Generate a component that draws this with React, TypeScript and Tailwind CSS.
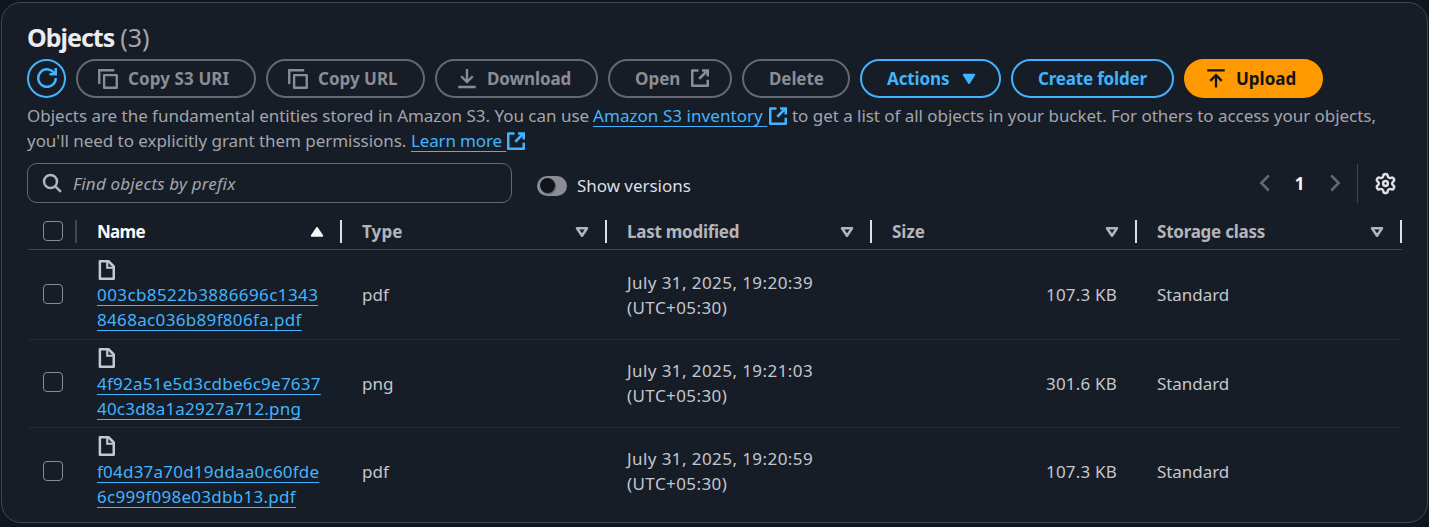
import type { ReactNode } from 'react';

type IconProps = { className?: string; children: ReactNode };

function Icon({ className = '', children }: IconProps) {
  return (
    <svg
      viewBox="0 0 16 16"
      className={`size-5 shrink-0 ${className}`}
      fill="none"
      stroke="currentColor"
      strokeWidth="2"
    >
      {children}
    </svg>
  );
}

const CopyIcon = () => (
  <Icon>
    <path d="M4.9 4.9H15V15H4.9z" strokeWidth="1.9" strokeLinejoin="round" />
    <path d="M1 12V1h12" strokeWidth="1.9" />
  </Icon>
);

const ExternalIcon = ({ className = '' }: { className?: string }) => (
  <Icon className={className}>
    <path d="M6.8 1.9H1.8v12.3h12.4V9.4" strokeLinejoin="round" />
    <path d="M9.6 1.9h4.6v4.8M14 2 7.4 8.6" />
  </Icon>
);

const FileIcon = () => (
  <Icon>
    <path d="M2.3 1h6.9l4.2 4.2V15H2.3z" strokeLinejoin="round" />
    <path d="M8.2 1.4v4.8h5" strokeWidth="1.7" />
  </Icon>
);

type ButtonProps = { width: string; tone?: string; children: ReactNode };

function PillButton({ width, tone = 'border-[#656871] text-[#8c8c94]', children }: ButtonProps) {
  return (
    <button
      className={`flex h-[39px] shrink-0 items-center whitespace-nowrap rounded-full border-2 text-[17px] font-bold leading-[25px] ${width} ${tone}`}
    >
      {children}
    </button>
  );
}

const BLUE = 'border-[#42b4ff] text-[#42b4ff]';

const LINK =
  'text-[#42b4ff] underline decoration-1 underline-offset-[4px] [text-decoration-skip-ink:none]';

function Checkbox() {
  return <span className="size-5 shrink-0 rounded-[4px] border border-[#8c8c94]" />;
}

const columns = [
  { label: 'Name', spacing: 'tracking-[-0.7px]', sorted: true },
  { label: 'Type', spacing: 'tracking-[0.1px]' },
  { label: 'Last modified', spacing: 'tracking-[-0.26px]' },
  { label: 'Size', spacing: '' },
  { label: 'Storage class', spacing: 'tracking-[-0.24px]' },
];

const rows = [
  {
    name: [
      { text: '003cb8522b3886696c1343', spacing: 'tracking-[0.41px]' },
      { text: '8468ac036b89f806fa.pdf', spacing: 'tracking-[0.33px]' },
    ],
    type: 'pdf',
    date: 'July 31, 2025, 19:20:39',
    size: '107.3 KB',
    height: 'h-[90px]',
    iconTop: 'pt-[3px]',
    dateBottom: '',
    checkBottom: 'pb-px',
  },
  {
    name: [
      { text: '4f92a51e5d3cdbe6c9e7637', spacing: 'tracking-[0.24px]' },
      { text: '40c3d8a1a2927a712.png', spacing: 'tracking-[0.2px]' },
    ],
    type: 'png',
    date: 'July 31, 2025, 19:21:03',
    size: '301.6 KB',
    height: 'h-[88px]',
    iconTop: 'pt-[2px]',
    dateBottom: 'pb-px',
    checkBottom: 'pb-[3px]',
  },
  {
    name: [
      { text: 'f04d37a70d19ddaa0c60fde', spacing: 'tracking-[0.22px]' },
      { text: '6c999f098e03dbb13.pdf', spacing: 'tracking-[0.27px]' },
    ],
    type: 'pdf',
    date: 'July 31, 2025, 19:20:59',
    size: '107.3 KB',
    height: 'h-[87px]',
    iconTop: 'pt-[2px]',
    dateBottom: 'pb-px',
    checkBottom: 'pb-px',
  },
];

const GRID = 'grid grid-cols-[49px_repeat(5,265px)]';

export default function App() {
  return (
    <div className="h-[527px] w-[1429px] overflow-hidden bg-[#10161e] pl-px pt-[2px] font-['Noto_Sans',sans-serif] text-[17px] leading-[25px] text-[#c6c6cd]">
      <section className="flex h-[521px] w-[1427px] flex-col rounded-[20px] border border-[#424650] bg-[#161d26] pl-[25px] pr-[24px]">
        <h2 className="mt-[19px] flex h-[30px] items-center gap-[6px] text-[25px] leading-[30px]">
          <span className="font-bold tracking-[-1px] text-[#ebebf0]">Objects</span>
          <span className="text-[#a4a4ad]">(3)</span>
        </h2>

        <div className="mt-[7px] flex gap-[10px]">
          <button className={`flex size-[39px] shrink-0 items-center justify-center rounded-full border-2 ${BLUE}`}>
            <Icon className="-mt-px">
              <path d="M10 5h5V0" />
              <path d="M15 8a7 7 0 1 1-.7-3" />
            </Icon>
          </button>
          <PillButton width="w-[180px] gap-[10px] pl-[20px]">
            <CopyIcon />
            <span className="tracking-[0.1px]">Copy S3 URI</span>
          </PillButton>
          <PillButton width="w-[159px] gap-[10px] pl-[20px]">
            <CopyIcon />
            <span>Copy URL</span>
          </PillButton>
          <PillButton width="w-[163px] gap-[10px] pl-[20px]">
            <Icon>
              <path d="M8 0v10M3.4 5.8 8 10.4l4.6-4.6M1 14.4h14" strokeWidth="1.9" />
            </Icon>
            <span className="tracking-[-0.1px]">Download</span>
          </PillButton>
          <PillButton width="w-[124px] gap-[10px] pl-[25px]">
            <span>Open</span>
            <ExternalIcon className="-mt-px" />
          </PillButton>
          <PillButton width="w-[108px] pl-[25px]">
            <span className="tracking-[-0.1px]">Delete</span>
          </PillButton>
          <PillButton width="w-[141px] gap-[10px] pl-[25px]" tone={BLUE}>
            <span className="tracking-[-0.1px]">Actions</span>
            <Icon className="-ml-px">
              <path d="M3.8 4.6h8.4L8 11.1z" fill="currentColor" strokeWidth="1.6" strokeLinejoin="round" />
            </Icon>
          </PillButton>
          <PillButton width="w-[163px] pl-[25px]" tone={BLUE}>
            <span className="tracking-[-0.18px]">Create folder</span>
          </PillButton>
          <PillButton width="w-[139px] gap-[10px] pl-[20px]" tone="border-[#ff9900] bg-[#ff9900] text-[#0f141a]">
            <Icon>
              <path d="M8 14.8V5M3.4 9.5 8 4.9l4.6 4.6M1 1h14" strokeWidth="1.8" />
            </Icon>
            <span>Upload</span>
          </PillButton>
        </div>

        <div className="mt-[5px] whitespace-nowrap text-[#a4a4ad]">
          <p className="flex">
            <span className="w-[566px] tracking-[-0.02px]">
              Objects are the fundamental entities stored in Amazon S3. You can use
            </span>
            <a className={`${LINK} w-[175px] whitespace-pre tracking-[0.06px]`}>Amazon S3 inventory </a>
            <ExternalIcon className="mt-[3px] text-[#42b4ff]" />
            <span className="ml-[4px] tracking-[-0.04px]">
              to get a list of all objects in your bucket. For others to access your objects,
            </span>
          </p>
          <p className="flex">
            <span className="w-[384px] tracking-[-0.04px]">
              you'll need to explicitly grant them permissions.
            </span>
            <a className={`${LINK} w-[95px] whitespace-pre tracking-[-0.15px]`}>Learn more </a>
            <ExternalIcon className="mt-[3px] text-[#42b4ff]" />
          </p>
        </div>

        <div className="mt-[10px] flex h-[40px] items-center">
          <div className="flex h-[40px] w-[485px] items-center gap-[11px] rounded-[10px] border border-[#656871] pl-[14px]">
            <Icon className="text-[#b4b4bb]">
              <circle cx="6.8" cy="6.8" r="5.2" />
              <path d="m10.5 10.5 4.6 4.6" />
            </Icon>
            <span className="italic tracking-[0.18px] text-[#a4a4ad]">Find objects by prefix</span>
          </div>
          <div className="ml-[25px] mt-[5px] flex items-center gap-[10px]">
            <span className="flex h-5 w-[30px] items-center rounded-full bg-[#8c8c94] pl-[3px]">
              <span className="size-[15px] rounded-full bg-[#0f141a] shadow-[1px_1px_1px_rgba(0,0,0,0.4)]" />
            </span>
            <span className="tracking-[-0.04px] text-[#dedee3]">Show versions</span>
          </div>
          <div className="ml-auto flex h-[39px] items-center">
            <Icon className="text-[#656871]">
              <path d="M11 2 5 8l6 6" />
            </Icon>
            <span className="w-[50px] pr-px text-center font-bold text-[#f9f9fa]">1</span>
            <Icon className="text-[#656871]">
              <path d="m5 2 6 6-6 6" />
            </Icon>
            <span className="ml-[12px] h-[39px] w-px bg-[#424650]" />
            <svg
              viewBox="0 0 24 24"
              className="ml-[16px] mr-[6px] size-[23px]"
              fill="none"
              stroke="#dedee3"
              strokeWidth="2.6"
              strokeLinecap="round"
              strokeLinejoin="round"
            >
              <path d="M9.671 4.136a2.34 2.34 0 0 1 4.659 0 2.34 2.34 0 0 0 3.319 1.915 2.34 2.34 0 0 1 2.33 4.033 2.34 2.34 0 0 0 0 3.831 2.34 2.34 0 0 1-2.33 4.033 2.34 2.34 0 0 0-3.319 1.915 2.34 2.34 0 0 1-4.659 0 2.34 2.34 0 0 0-3.32-1.915 2.34 2.34 0 0 1-2.33-4.033 2.34 2.34 0 0 0 0-3.831A2.34 2.34 0 0 1 6.35 6.051a2.34 2.34 0 0 0 3.319-1.915" />
              <circle cx="12" cy="12" r="2.5" />
            </svg>
          </div>
        </div>

        <div className="ml-px mt-[10px] w-[1374px]">
          <div className={`${GRID} h-[37px] border-b border-[#424650] font-bold text-[#b4b4bb]`}>
            <div className="mt-[7px] flex h-[23px] justify-between border-r-2 border-[#424650] pl-[15px]">
              <span className="mt-px flex">
                <Checkbox />
              </span>
            </div>
            {columns.map((c) => (
              <div
                key={c.label}
                className="mt-[7px] flex h-[23px] items-center justify-between border-r-2 border-[#dedee3] pl-[20px] pr-[13px]"
              >
                <span className={`${c.spacing} ${c.sorted ? 'text-[#f9f9fa]' : ''}`}>{c.label}</span>
                <Icon className={c.sorted ? 'text-[#f9f9fa]' : ''}>
                  {c.sorted ? (
                    <path d="M3.8 11h8.4L8 4.9z" fill="currentColor" strokeWidth="1.6" strokeLinejoin="round" />
                  ) : (
                    <path d="M4 5h8l-4 6z" strokeLinejoin="round" />
                  )}
                </Icon>
              </div>
            ))}
          </div>
          {rows.map((r, i) => (
            <div
              key={r.date}
              className={`${GRID} ${r.height} items-center ${i < rows.length - 1 ? 'border-b border-[#232b37]' : ''}`}
            >
              <div className={`flex pl-[15px] ${r.checkBottom}`}>
                <Checkbox />
              </div>
              <div className="flex flex-col items-start pl-[20px]">
                <span className={`flex h-[25px] items-start ${r.iconTop}`}>
                  <FileIcon />
                </span>
                {r.name.map((n) => (
                  <a key={n.text} className={`${LINK} ${n.spacing}`}>
                    {n.text}
                  </a>
                ))}
              </div>
              <div className="pl-[20px]">{r.type}</div>
              <div className={`pl-[20px] tracking-[0.42px] ${r.dateBottom}`}>
                {r.date}
                <br />
                (UTC+05:30)
              </div>
              <div className="pr-[20px] text-right tracking-[0.2px]">{r.size}</div>
              <div className="pl-[20px] tracking-[-0.05px]">Standard</div>
            </div>
          ))}
        </div>
      </section>
    </div>
  );
}
